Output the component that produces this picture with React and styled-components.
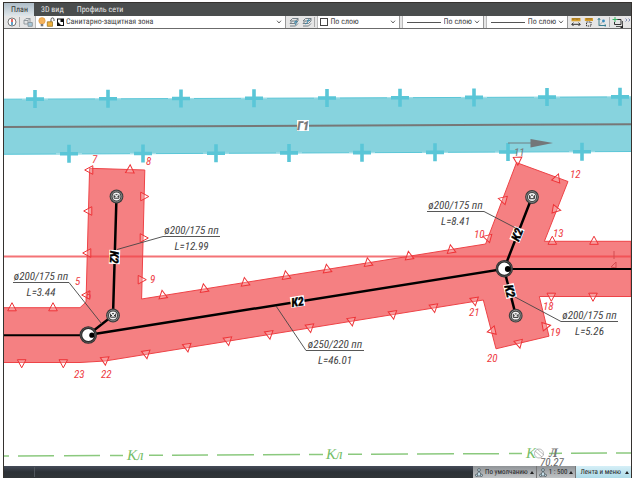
import React, { useState } from "react"
import styled, { createGlobalStyle } from "styled-components"

const GlobalStyle = createGlobalStyle`
	* {
		box-sizing: border-box;
	}
	body {
		margin: 0;
		background: #fff;
		font-family: "Roboto Condensed", "Open Sans", sans-serif;
		font-size: 8px;
		line-height: 12px;
		text-rendering: geometricPrecision;
		color: #444;
	}
	button,
	select {
		font: inherit;
		color: inherit;
		text-rendering: inherit;
		margin: 0;
		padding: 0;
		border: 0;
		background: none;
	}
`

const Window = styled.div`
	margin: 2px 5px 1px 3px;
	border: 1px solid #35322f;
	border-bottom-width: 0;
	background: #fff;
`

const TabBar = styled.nav`
	display: flex;
	height: 13px;
	background: #4a4d4d;
`

const Tab = styled.button`
	padding: 0 6px 0 7px;
	color: ${(props) => (props.$active ? "#333" : "#e4e4e4")};
	background: ${(props) =>
		props.$active ? "linear-gradient(#aebdc8, #dfe6ea)" : "none"};
`

const Toolbar = styled.div`
	display: flex;
	align-items: center;
	gap: 2px;
	height: 13px;
	padding-left: 2px;
	background: #e6e6e6;
	border-bottom: 1px solid #6b6b6b;
`

const ToolButton = styled.button`
	display: flex;
	flex: none;
	align-items: center;
	justify-content: center;
	width: ${(props) => (props.$narrow ? 6 : 11)}px;
	height: 12px;
`

const Separator = styled.span`
	flex: none;
	width: 1px;
	height: 10px;
	background: #a9a9a9;
`

const Combo = styled.label`
	display: flex;
	align-items: center;
	flex: ${(props) => props.$grow} 1 0;
	min-width: 0;
	height: 12px;
	padding: 0 3px 0 2px;
	gap: 1px;
	background: #fff;
	border-right: 1px solid #999;
	border-left: 1px solid #bbb;

	svg {
		flex: none;
	}
`

const ComboSelect = styled.select`
	flex: 1;
	min-width: 0;
	height: 12px;
	line-height: 12px;
	appearance: none;
	outline: none;
`

const Swatch = styled.span`
	flex: none;
	width: 8px;
	height: 8px;
	margin-right: 1px;
	border: 1px solid #444;
	background: #fff;
`

const LineSample = styled.span`
	flex: none;
	width: 34px;
	height: 1px;
	margin: 0 2px;
	background: #555;
`

const Canvas = styled.svg`
	display: block;
	width: 100%;
	height: auto;
	background: #fff;
	font-family: "Liberation Sans Narrow", "Roboto Condensed", "Liberation Sans", sans-serif;
	font-style: italic;
	font-size: 11px;
`

const StatusBar = styled.footer`
	display: flex;
	justify-content: flex-end;
	height: 12px;
	font-size: 7px;
	background: linear-gradient(#454c59, #2c3136 50%, #303437);
`

const StatusSeam = styled.span`
	width: 1px;
	margin: 1px auto 1px 30px;
	background: #50565c;
`

const StatusButton = styled.button`
	display: flex;
	align-items: center;
	gap: 2px;
	padding: 0 2px;
	white-space: nowrap;
	color: #222;
	border-right: 1px solid #777;
	background: ${(props) =>
		props.$active
			? "linear-gradient(#d5eff7, #aedbe8)"
			: "linear-gradient(#8f9397, #c1c4c6)"};

	&:last-child {
		padding-left: 4px;
		gap: 4px;
		border-right: 0;
	}
`

const tabs = ["План", "3D вид", "Профиль сети"]

const topCrosses = [35, 108, 181, 254, 327, 400, 474, 547, 620]
const bottomCrosses = [69, 143, 216, 289, 362, 435, 508, 582]

const zoneOutline =
	"M4 307.7H80L86 302L89.6 168.3L144.8 170L141.6 299L485.6 244L516.5 162.6L568 181.5L544.4 241.3H631V296.5H539.3L549 336.2L496 348.8L483.3 300L105 361L80 362.5H4"

// x, y, direction in degrees (0 points up)
const markers = [
	[12, 307, 0],
	[53, 307, 0],
	[89, 170, -90],
	[88, 211, -90],
	[87, 253, -90],
	[86, 295, -90],
	[130, 169, 2],
	[144.5, 196.5, 90],
	[144, 238, 90],
	[142, 279.7, 90],
	[162.7, 294.5, -9],
	[204, 288, -9],
	[245, 281.7, -9],
	[286, 275, -9],
	[327, 268.5, -9],
	[368, 262, -9],
	[409, 255.5, -9],
	[451, 249, -9],
	[487, 237.5, -75],
	[502.5, 199.5, -75],
	[517.7, 161, 178],
	[557, 178, 20],
	[556.5, 209.5, 100],
	[552.3, 240.5, 0],
	[594, 240.5, 0],
	[551.3, 297, 180],
	[593, 297, 180],
	[546.3, 326, 80],
	[519, 344, 167],
	[491.5, 331, -103],
	[474.7, 301.5, 171],
	[434, 308.3, 171],
	[393, 315, 171],
	[351.7, 321.7, 171],
	[310, 328.3, 171],
	[269.3, 335, 171],
	[228, 341.3, 171],
	[187.3, 347.7, 171],
	[146.3, 354.5, 171],
	[105, 361, 175],
	[63.3, 363.5, 180],
	[21.7, 363.5, 180],
]

const zoneNumbers = [
	[92, 163, "7"],
	[146, 165, "8"],
	[75, 285, "5"],
	[86, 299, "6"],
	[150, 283, "9"],
	[74, 378, "23"],
	[101, 378, "22"],
	[474, 238, "10"],
	[570, 178, "12"],
	[553, 237, "13"],
	[543, 310, "18"],
	[550, 336, "19"],
	[487, 362, "20"],
	[469, 316, "21"],
]

// from: point on the pipe, x1: shelf end that the leader joins, x2: free end
const callouts = [
	{ id: "a", from: [117, 249.5], x1: 163, x2: 220, y: 236.5, pipe: "ø200/175 пп", len: "L=12.99" },
	{ id: "b", from: [101.5, 323.5], x1: 69, x2: 13, y: 282.5, pipe: "ø200/175 пп", len: "L=3.44" },
	{ id: "c", from: [276, 306], x1: 306, x2: 364, y: 350.5, pipe: "ø250/220 пп", len: "L=46.01" },
	{ id: "d", from: [515.7, 228], x1: 484, x2: 427, y: 211.5, pipe: "ø200/175 пп", len: "L=8.41" },
	{ id: "e", from: [515, 297], x1: 561, x2: 618, y: 321.5, pipe: "ø200/175 пп", len: "L=5.26" },
]

const cableDashes = [
	[4, 9], [18, 54], [64, 100], [110, 123], [149, 163], [172, 208], [217, 254],
	[263, 300], [309, 323], [348, 362], [371, 408], [417, 454], [463, 499],
	[509, 522], [549, 562], [571, 607], [616, 631],
]

const cableY = (x) => 456 - ((x - 4) / 627) * 3
const bandTop = (x) => 99.2 - ((x - 4) / 627) * 2.4

function Chevron() {
	return (
		<svg width="6" height="4" viewBox="0 0 6 4" fill="none" stroke="#444" strokeWidth=".8">
			<path d="M1 .7L3 3L5 .7" />
		</svg>
	)
}

function Layer({ label, value = "По слою", grow = 4, children }) {
	return (
		<Combo $grow={grow}>
			{children}
			<ComboSelect aria-label={label}>
				<option>{value}</option>
			</ComboSelect>
			<Chevron />
		</Combo>
	)
}

function LayerIcons() {
	return (
		<svg width="27" height="10" viewBox="0 0 27 10">
			<circle cx="4" cy="3.8" r="3.2" fill="#f5b35c" stroke="#dd9440" strokeWidth=".6" />
			<path d="M2.7 7H5.3V9.3H2.7Z" fill="#777" />
			<path d="M13 5V2.5Q13 .9 14.5 .9T16 2.5V4" fill="none" stroke="#555" />
			<path d="M9.3 4.8H14.5V9.3H9.3Z" fill="#f0b13c" stroke="#9b7524" strokeWidth=".8" />
			<path d="M19 1.5H26V9H19Z" fill="#111" />
			<path d="M20 2.5H22.5V5H25V8H23L20 5Z" fill="#fff" />
		</svg>
	)
}

function StackIcon({ up }) {
	return (
		<svg width="10" height="10" viewBox="0 0 10 10" fill="none" stroke="#68747c" strokeWidth=".9">
			<path d="M1 4L3.5 1.5H9L7 4ZM1 6.5L3 4.5M1 6.5H6.5L9 4V1.5M1 9H6.5L9 6.5" />
			<path d={up ? "M3 7Q6 6.5 6.5 3M5 4L6.5 2.5L8 4" : "M6 8Q8 7 6.5 4.5M5.5 6L6.5 4L8.5 5"} stroke="#3789ad" />
		</svg>
	)
}

function ScaleIcon() {
	return (
		<svg width="8" height="9" viewBox="0 0 8 9" fill="#c4dde8" stroke="#3f4a50" strokeWidth=".7">
			<path d="M4 3L1 8H7Z" />
			<circle cx="4" cy="2" r="1.4" />
			<circle cx="1.5" cy="7.3" r="1.1" />
			<circle cx="6.5" cy="7.3" r="1.1" />
		</svg>
	)
}

function UpArrow() {
	return (
		<svg width="4" height="3" viewBox="0 0 4 3">
			<path d="M0 3L2 0L4 3Z" fill="#222" />
		</svg>
	)
}

function Cross({ x, y }) {
	return (
		<g>
			<path d={`M${x - 13} ${y}H${x + 13}`} stroke="#fff" strokeOpacity=".45" />
			<path d={`M${x - 9} ${y}H${x + 9}M${x} ${y - 9}V${y + 9}`} stroke="#5ac6d7" strokeWidth="3.6" />
		</g>
	)
}

function PipeLabel({ x, y, angle, children, color = "#000", width = 14 }) {
	return (
		<g transform={`translate(${x} ${y}) rotate(${angle})`}>
			<rect x={-width / 2} y="-5.5" width={width} height="11" fill="#fff" />
			<text y="4.5" textAnchor="middle" fontSize="12" fontWeight="bold" fill={color} stroke={color} strokeWidth=".4">
				{children}
			</text>
		</g>
	)
}

function Callout({ from, x1, x2, y, pipe, len }) {
	const middle = (x1 + x2) / 2
	return (
		<g>
			<path d={`M${from[0]} ${from[1]}L${x1} ${y}H${x2}`} fill="none" stroke="#444" strokeWidth=".9" />
			<text x={middle} y={y - 3} textAnchor="middle" fill="#444">
				{pipe}
			</text>
			<text x={middle} y={y + 13} textAnchor="middle" fill="#444">
				{len}
			</text>
		</g>
	)
}

function Well({ x, y, dot }) {
	return (
		<g transform={`translate(${x} ${y})`}>
			<circle r="7.4" fill="#fff" stroke="#2b2b2b" strokeWidth="2.6" />
			<circle r="7.6" fill="none" stroke="#777" strokeWidth=".5" />
			<circle cx="3.6" cy=".2" r={dot} fill="#000" />
		</g>
	)
}

function Outlet({ x, y }) {
	return (
		<g transform={`translate(${x} ${y})`}>
			<circle r="6.9" fill="#3b3b3b" />
			<circle r="5.4" fill="none" stroke="#999" strokeWidth=".8" />
			<circle r="3.9" fill="#f4f4f4" />
			<path d="M-2.4 -1.8V1.7H2.4V-1.8M-2.4 0H-1M1 0H2.4M-1 -1.8H1" fill="none" stroke="#333" />
		</g>
	)
}

function Drawing() {
	return (
		<Canvas viewBox="4 29 627 437" role="img" aria-label="План сети">
			<path d="M4 99.2L631 96.8V151.5L4 154.3Z" fill="#87d3de" />
			<path d="M4 99.2L631 96.8M4 154.3L631 151.5" stroke="#5ac6d7" />
			{topCrosses.map((x) => (
				<Cross key={x} x={x} y={bandTop(x)} />
			))}
			{bottomCrosses.map((x) => (
				<Cross key={x} x={x} y={bandTop(x) + 54.8} />
			))}
			<path d="M4 127L631 124.3" stroke="#777" strokeWidth="2" />
			<PipeLabel x={303} y={125.5} angle={0} color="#777" width={12}>
				Г1
			</PipeLabel>
			<path d="M508 143H532" stroke="#6f7f83" />
			<path d="M530.5 139L553 143L530.5 147.5Z" fill="#737779" />

			<path d={zoneOutline} fill="#f58082" stroke="#ee4347" />
			<path d="M4 256.5H631" stroke="#f04448" strokeOpacity=".75" strokeWidth="2" />
			{markers.map(([x, y, angle]) => (
				<path
					key={`${x}-${y}`}
					d="M0 -4.3L4.3 3.8H-4.3Z"
					transform={`translate(${x} ${y}) rotate(${angle})`}
					fill="#fff"
					fillOpacity=".22"
					stroke="#ee3337"
				/>
			))}
			{zoneNumbers.map(([x, y, label]) => (
				<text key={label} x={x} y={y} fill="#ee3b3f">
					{label}
				</text>
			))}
			<text x="514" y="156" fill="#777">11</text>
			<path d="M614 251V259M611 267L616 262V268Z" fill="none" stroke="#d34c50" />

			<path d="M4 335.3H88M504 269H631" stroke="#000" strokeWidth="2" />
			<path
				d="M116.5 196.5L113 315.5L88 335L504 269L532 197M504 269L516 316"
				fill="none"
				stroke="#000"
				strokeWidth="2.5"
			/>
			<PipeLabel x={297.5} y={301.5} angle={-9}>К2</PipeLabel>
			<PipeLabel x={114.5} y={257} angle={92}>К2</PipeLabel>
			<PipeLabel x={517} y={234.5} angle={-68}>К2</PipeLabel>
			<PipeLabel x={510} y={291} angle={76}>К2</PipeLabel>
			{callouts.map(({ id, ...callout }) => (
				<Callout key={id} {...callout} />
			))}
			<Well x={88.3} y={335} dot={2.6} />
			<Well x={504.3} y={268.7} dot={3} />
			<Outlet x={116.5} y={196.5} />
			<Outlet x={113} y={315.5} />
			<Outlet x={532} y={197} />
			<Outlet x={515.7} y={315.7} />

			{cableDashes.map(([x1, x2]) => (
				<line key={x1} x1={x1} x2={x2} y1={cableY(x1)} y2={cableY(x2)} stroke="#8bc97e" strokeWidth="1.5" />
			))}
			<g fill="#74bd66" fontFamily="Liberation Serif, serif" fontSize="15">
				<text x="127" y="460">Кл</text>
				<text x="326" y="459">Кл</text>
				<text x="526" y="458">К</text>
			</g>
			<g fill="none" stroke="#aaa" strokeWidth=".8">
				<circle cx="539" cy="453.5" r="4.5" />
				<path d="M535 451L542 457M537 449L544 455" />
			</g>
			<text x="549" y="457" fill="#777" fontFamily="Liberation Serif, serif" fontSize="13" fontWeight="bold">
				Л
			</text>
			<text x="540" y="466" fill="#666">70.27</text>
		</Canvas>
	)
}

export default function App() {
	const [tab, setTab] = useState("План")

	return (
		<>
			<GlobalStyle />
			<Window>
				<TabBar>
					{tabs.map((name) => (
						<Tab key={name} $active={name === tab} onClick={() => setTab(name)}>
							{name}
						</Tab>
					))}
				</TabBar>
				<Toolbar>
					<ToolButton aria-label="Сведения">
						<svg width="10" height="10" viewBox="0 0 10 10">
							<circle cx="5" cy="5" r="4" fill="#fff" stroke="#555" strokeWidth=".8" />
							<path d="M5 2V5" stroke="#e0403a" strokeWidth="1.6" />
							<path d="M5 5V8.3" stroke="#3b88b7" strokeWidth="1.6" />
						</svg>
					</ToolButton>
					<Separator />
					<ToolButton aria-label="Слои">
						<svg width="10" height="10" viewBox="0 0 10 10" fill="none" stroke="#8a9399" strokeWidth=".9">
							<path d="M1 3.5L3 1.5H7V5M1 3.5H5V7H1ZM5 3.5L7 1.5" />
							<path d="M5 5.5H9.3V9.3H5Z" fill="#a8c9da" />
						</svg>
					</ToolButton>
					<Layer label="Слой" value="Санитарно-защитная зона" grow={13}>
						<LayerIcons />
					</Layer>
					<ToolButton aria-label="Слой объекта">
						<StackIcon />
					</ToolButton>
					<ToolButton aria-label="Предыдущий слой">
						<StackIcon up />
					</ToolButton>
					<Separator />
					<Layer label="Цвет">
						<Swatch />
					</Layer>
					<Layer label="Тип линии">
						<LineSample />
					</Layer>
					<Layer label="Вес линии">
						<LineSample />
					</Layer>
					<ToolButton aria-label="Расстояние">
						<svg width="10" height="10" viewBox="0 0 10 10">
							<path d="M.5 1H9.5V4.3H.5Z" fill="#d8a02c" />
							<path d="M2 1V3M4 1V2.5M6 1V3M8 1V2.5" stroke="#674c18" strokeWidth=".7" />
							<path d="M.7 7.3H9.3M2.5 5.7L.8 7.3L2.5 9M7.5 5.7L9.2 7.3L7.5 9" fill="none" stroke="#333" />
						</svg>
					</ToolButton>
					<ToolButton aria-label="Площадь">
						<svg width="10" height="10" viewBox="0 0 10 10">
							<path d="M.8 1H9V4H.8Z" fill="#d8a02c" />
							<path d="M3 1V2.7M5 1V2.5M7 1V2.7" stroke="#674c18" strokeWidth=".7" />
							<path d="M2.5 5H7V9H2.5Z" fill="none" stroke="#333" strokeDasharray="1.3 .8" />
						</svg>
					</ToolButton>
					<ToolButton aria-label="Координаты">
						<svg width="10" height="10" viewBox="0 0 10 10" fill="none">
							<path d="M2 8.5V1.5M.8 3L2 1.2L3.2 3M2 8.5H9M7.7 7.3L9 8.5L7.7 9.7" stroke="#3b8192" />
							<path d="M2 8.5L6.5 4" stroke="#777" strokeDasharray="1 .6" />
							<circle cx="6.5" cy="4" r="1.4" fill="#378dbf" />
						</svg>
					</ToolButton>
					<Separator />
					<ToolButton aria-label="Добавить вид">
						<svg width="11" height="11" viewBox="0 0 11 11" fill="none">
							<path d="M4.5 2.5H9V7.5H2.5V5" stroke="#333" />
							<path d="M4 9.5H10.5V4" stroke="#555" />
							<path d="M3 0V5M.5 2.5H5.5" stroke="#36b764" />
							<path d="M11 8V11H8Z" fill="#222" />
						</svg>
					</ToolButton>
					<ToolButton $narrow aria-label="Ещё">
						<svg width="6" height="8" viewBox="0 0 6 8" fill="none" stroke="#6877a8" strokeWidth=".8">
							<path d="M.5 .5L2 2L.5 3.5M3.5 .5L5 2L3.5 3.5" />
						</svg>
					</ToolButton>
				</Toolbar>
				<Drawing />
				<StatusBar>
					<StatusSeam />
					<StatusButton>
						<ScaleIcon />
						По умолчанию
						<UpArrow />
					</StatusButton>
					<StatusButton>
						<ScaleIcon />
						1 : 500
						<UpArrow />
					</StatusButton>
					<StatusButton $active>
						Лента и меню
						<UpArrow />
					</StatusButton>
				</StatusBar>
			</Window>
		</>
	)
}
